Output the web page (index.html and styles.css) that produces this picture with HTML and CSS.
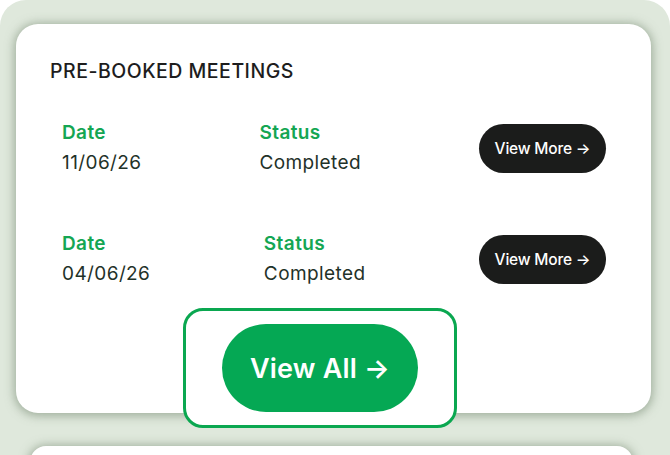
FILE: index.html
```html
<!DOCTYPE html>
<html lang="en">
<head>
  <meta charset="UTF-8" />
  <meta name="viewport" content="width=device-width, initial-scale=1.0"/>
  <title>Pre-booked Meetings</title>
  <link rel="stylesheet" href="styles.css">
</head>
<body>
  <div class="frame">
    <section class="card">
      <h2 class="card-title">PRE-BOOKED MEETINGS</h2>
      <div class="meetings">
        <div class="meeting">
          <div class="field">
            <span class="label">Date</span>
            <span class="value">11/06/26</span>
          </div>
          <div class="field">
            <span class="label">Status</span>
            <span class="value">Completed</span>
          </div>
          <button class="btn-more">View More →</button>
        </div>
        <div class="meeting">
          <div class="field">
            <span class="label">Date</span>
            <span class="value">04/06/26</span>
          </div>
          <div class="field">
            <span class="label">Status</span>
            <span class="value">Completed</span>
          </div>
          <button class="btn-more">View More →</button>
        </div>
      </div>
      <div class="all-wrap">
        <button class="btn-all">View All →</button>
      </div>
    </section>
    <section class="card card-next"></section>
  </div>
</body>
</html>
```

FILE: styles.css
```css
* {
  box-sizing: border-box;
}

body {
  margin: 0;
  background-color: #ffffff;
  font-family: 'Inter', 'Noto Sans', sans-serif;
  overflow: hidden;
}

.frame {
  background-color: #dfe8dc;
  border-radius: 26px 26px 0 0;
  padding: 24px 19px 0 16px;
  height: 470px;
}

.card {
  display: flow-root;
  background-color: #ffffff;
  border-radius: 22px;
  padding: 35px 34px 0;
  box-shadow: 0 1px 10px 2px rgba(110, 130, 105, 0.55);
}

.card-title {
  margin: 0;
  font-size: 19.5px;
  line-height: 24px;
  font-weight: 500;
  color: #1d1d1d;
  letter-spacing: 0.5px;
}

.meetings {
  display: flex;
  flex-direction: column;
  gap: 51px;
  margin-top: 35px;
}

.meeting {
  display: flex;
  align-items: center;
  justify-content: space-between;
  padding: 0 11px 0 12px;
}

.field {
  display: flex;
  flex-direction: column;
}

.label {
  font-size: 19px;
  line-height: 30px;
  font-weight: 600;
  color: #14a653;
  letter-spacing: 0.4px;
}

.value {
  font-size: 19px;
  line-height: 30px;
  color: #1f3229;
  letter-spacing: 0.4px;
}

.btn-more {
  width: 127px;
  height: 49px;
  border: none;
  border-radius: 25px;
  background-color: #1b1c1b;
  color: #ffffff;
  font-family: inherit;
  font-size: 15.5px;
  font-weight: 500;
  letter-spacing: -0.2px;
}

.all-wrap {
  width: 274px;
  margin: 19px 0 -15px 133px;
  padding: 13px 36px;
  border: 3px solid #0aa750;
  border-radius: 20px;
  background-color: #ffffff;
  position: relative;
}

.btn-all {
  display: block;
  width: 196px;
  height: 88px;
  border: none;
  border-radius: 44px;
  background-color: #05a854;
  color: #ffffff;
  font-family: inherit;
  font-size: 27px;
  font-weight: 600;
  letter-spacing: 0.2px;
}

.card-next {
  margin: 33px 18px 0 14px;
  height: 60px;
  padding: 0;
  border-radius: 16px;
}
```
